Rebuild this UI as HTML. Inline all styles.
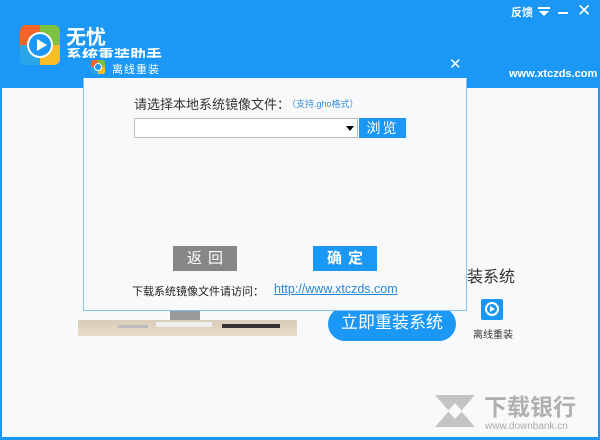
<!DOCTYPE html>
<html><head><meta charset="utf-8"><style>
*{margin:0;padding:0;box-sizing:border-box}
body{width:600px;height:440px;position:relative;overflow:hidden;background:#f7f9fb;font-family:"Liberation Sans","Noto Sans CJK SC",sans-serif}
.a{position:absolute;white-space:nowrap}
</style></head><body>
<div class="a" style="left:0;top:0;width:600px;height:88px;background:#1b98f5"></div>
<div class="a" style="left:0;top:88px;width:2px;height:352px;background:#1b98f5"></div>
<div class="a" style="right:0;top:88px;width:2px;height:352px;background:#1b98f5"></div>
<div class="a" style="left:0;top:437px;width:600px;height:3px;background:#1b98f5"></div>
<!-- logo -->
<div class="a" style="left:20px;top:25px;width:40px;height:40px;border-radius:6px;overflow:hidden">
<div class="a" style="left:0;top:0;width:20px;height:20px;background:#f2642a"></div>
<div class="a" style="left:20px;top:0;width:20px;height:20px;background:#7cc142"></div>
<div class="a" style="left:0;top:20px;width:20px;height:20px;background:#2aa6e8"></div>
<div class="a" style="left:20px;top:20px;width:20px;height:20px;background:#f9be25"></div>
<div class="a" style="left:7px;top:7px;width:26px;height:26px;border-radius:50%;background:#1b98f5;border:2px solid #fff"></div>
<div class="a" style="left:17px;top:14px;width:0;height:0;border-left:10px solid #fff;border-top:6px solid transparent;border-bottom:6px solid transparent"></div>
</div>
<div class="a" style="left:66px;top:27px;color:#fff;font-size:20px;font-weight:bold;line-height:22px">无忧</div>
<div class="a" style="left:66px;top:48px;color:#fff;font-size:16px;font-weight:bold;line-height:18px;height:10px;overflow:hidden">系统重装助手</div>
<div class="a" style="left:511px;top:4px;color:#fff;font-size:11px;font-weight:bold">反馈</div>
<div class="a" style="left:538px;top:7px;width:12px;height:2px;background:#fff"></div>
<div class="a" style="left:539px;top:11px;width:0;height:0;border-left:5px solid transparent;border-right:5px solid transparent;border-top:5px solid #fff"></div>
<div class="a" style="left:558px;top:12px;width:10px;height:2px;background:#fff"></div>
<div class="a" style="left:577px;top:0;color:#fff;font-size:17px;line-height:22px">✕</div>
<div class="a" style="left:509px;top:68px;color:#fff;font-size:11px;font-weight:bold">www.xtczds.com</div>
<!-- background content -->
<div class="a" style="left:170px;top:308px;width:30px;height:12px;background:#9a9a9a"></div>
<div class="a" style="left:78px;top:320px;width:219px;height:16px;background:linear-gradient(#d8cdb9,#e8dcc6)"></div>
<div class="a" style="left:156px;top:322px;width:56px;height:5px;background:#f0f0f0"></div>
<div class="a" style="left:222px;top:324px;width:58px;height:4px;background:#333"></div>
<div class="a" style="left:118px;top:325px;width:30px;height:3px;background:#bbb"></div>
<div class="a" style="left:467px;top:263px;color:#333;font-size:16px">装系统</div>
<div class="a" style="left:328px;top:307px;width:128px;height:34px;border-radius:17px;background:#1b98f5;color:#fff;font-size:17px;line-height:32px;text-align:center">立即重装系统</div>
<div class="a" style="left:481px;top:299px;width:22px;height:21px;background:#1b98f5;border-radius:2px"></div>
<div class="a" style="left:485px;top:302px;width:14px;height:14px;border-radius:50%;border:2px solid #fff"></div>
<div class="a" style="left:490px;top:306px;width:0;height:0;border-left:5px solid #fff;border-top:3px solid transparent;border-bottom:3px solid transparent"></div>
<div class="a" style="left:473px;top:326px;color:#333;font-size:10px">离线重装</div>
<!-- watermark -->
<svg class="a" style="left:435px;top:395px" width="40" height="32" viewBox="0 0 40 32"><path d="M0 0H40L26 16L40 32H0L14 16Z" fill="#c4c4c4"/><path d="M20 8L27 16L20 24L13 16Z" fill="#f7f9fb"/></svg>
<div class="a" style="left:484px;top:394px;color:#b0b0b0;font-size:23px;font-weight:bold;line-height:26px">下载银行</div>
<div class="a" style="left:485px;top:421px;color:#aaa;font-size:10px;line-height:12px">www.downbank.cn</div>
<!-- dialog -->
<div class="a" style="left:83px;top:78px;width:384px;height:233px;background:#f7f9fb;border:1px solid #86c3ea;border-top:none"></div>
<div class="a" style="left:91px;top:60px;width:14px;height:14px;border-radius:2px;overflow:hidden">
<div class="a" style="left:0;top:0;width:7px;height:7px;background:#f2642a"></div><div class="a" style="left:7px;top:0;width:7px;height:7px;background:#7cc142"></div><div class="a" style="left:0;top:7px;width:7px;height:7px;background:#2aa6e8"></div><div class="a" style="left:7px;top:7px;width:7px;height:7px;background:#f9be25"></div>
<div class="a" style="left:3px;top:3px;width:8px;height:8px;border-radius:50%;background:#1b98f5;border:1px solid #fff"></div></div>
<div class="a" style="left:112px;top:61px;color:#fff;font-size:11px;letter-spacing:1px">离线重装</div>
<div class="a" style="left:449px;top:55px;color:#fff;font-size:15px">✕</div>
<div class="a" style="left:134px;top:94px;color:#333;font-size:13px">请选择本地系统镜像文件：</div>
<div class="a" style="left:287px;top:97px;color:#3a8ed8;font-size:9px">（支持.gho格式）</div>
<div class="a" style="left:134px;top:118px;width:224px;height:20px;background:#fff;border:1px solid #bbb"></div>
<div class="a" style="left:346px;top:126px;width:0;height:0;border-left:4px solid transparent;border-right:4px solid transparent;border-top:5px solid #000"></div>
<div class="a" style="left:359px;top:118px;width:47px;height:20px;background:#1b98f5;color:#fff;font-size:14px;line-height:20px;text-align:center;letter-spacing:2px">浏览</div>
<div class="a" style="left:173px;top:246px;width:64px;height:25px;background:#878787;color:#fff;font-size:15px;line-height:25px;text-align:center;letter-spacing:6px;padding-left:6px">返回</div>
<div class="a" style="left:313px;top:246px;width:64px;height:25px;background:#1b98f5;color:#fff;font-size:15px;line-height:25px;text-align:center;letter-spacing:6px;padding-left:6px;font-weight:bold">确定</div>
<div class="a" style="left:132px;top:283px;color:#222;font-size:11px">下载系统镜像文件请访问：</div>
<div class="a" style="left:274px;top:282px;color:#2b86d6;font-size:12.5px;text-decoration:underline">http://www.xtczds.com</div>
</body></html>
